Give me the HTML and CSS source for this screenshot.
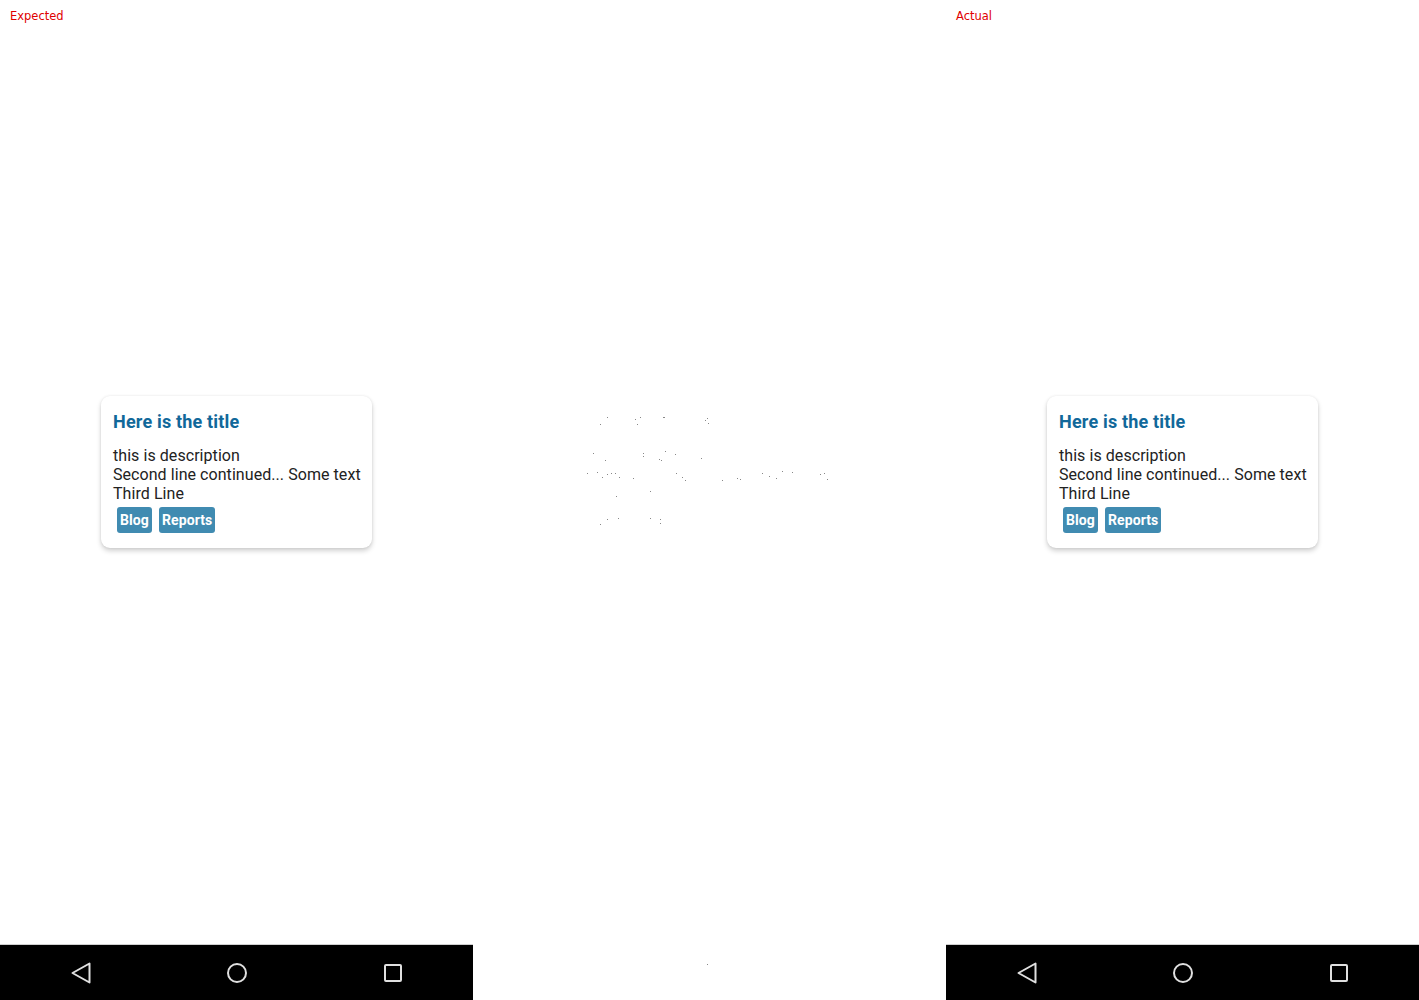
FILE: index.html
```html
<!DOCTYPE html>
<html>
<head>
<meta charset="utf-8">
<link rel="stylesheet" href="styles.css">
</head>
<body>
<div class="compare">
  <section class="panel">
    <span class="label">Expected</span>
    <div class="screen">
      <div class="card">
        <h2 class="title">Here is the title</h2>
        <p class="desc">this is description<br>Second line continued... Some text<br>Third Line</p>
        <div class="tags"><span class="tag">Blog</span><span class="tag">Reports</span></div>
      </div>
    </div>
    <nav class="navbar">
      <svg class="nav-icon" width="24" height="24" viewBox="0 0 24 24"><path d="M20.5 2.5 L20.5 21.5 L3.5 12 Z" fill="none" stroke="#e0e0e0" stroke-width="2" stroke-linejoin="round"/></svg>
      <svg class="nav-icon" width="24" height="24" viewBox="0 0 24 24"><circle cx="12" cy="12" r="9" fill="none" stroke="#e0e0e0" stroke-width="2"/></svg>
      <svg class="nav-icon" width="24" height="24" viewBox="0 0 24 24"><rect x="4" y="4" width="16" height="16" rx="1" fill="none" stroke="#e0e0e0" stroke-width="2"/></svg>
    </nav>
  </section>
  <section class="panel diff">
    <svg class="dots" width="473" height="1000" viewBox="0 0 473 1000">
      <g fill="#888">
        <rect x="134" y="417" width="1" height="1"/><rect x="127" y="424" width="1" height="1"/><rect x="162" y="419" width="1" height="1"/><rect x="167" y="417" width="1" height="1"/><rect x="190" y="417" width="2" height="1"/><rect x="164" y="424" width="1" height="1"/><rect x="232" y="420" width="1" height="1"/><rect x="235" y="423" width="1" height="1"/><rect x="234" y="418" width="1" height="1"/>
        <rect x="120" y="453" width="1" height="1"/><rect x="132" y="460" width="1" height="1"/><rect x="170" y="453" width="1" height="1"/><rect x="170" y="456" width="1" height="1"/><rect x="192" y="451" width="1" height="1"/><rect x="186" y="459" width="1" height="1"/><rect x="188" y="460" width="1" height="1"/><rect x="202" y="454" width="1" height="1"/><rect x="228" y="458" width="1" height="1"/>
        <rect x="114" y="473" width="1" height="1"/><rect x="124" y="472" width="1" height="1"/><rect x="129" y="477" width="1" height="1"/><rect x="134" y="474" width="1" height="1"/><rect x="138" y="473" width="1" height="1"/><rect x="142" y="473" width="1" height="1"/><rect x="146" y="477" width="1" height="1"/><rect x="160" y="478" width="1" height="1"/><rect x="203" y="473" width="1" height="1"/><rect x="209" y="477" width="1" height="1"/><rect x="212" y="480" width="1" height="1"/><rect x="249" y="480" width="1" height="1"/><rect x="264" y="478" width="1" height="1"/><rect x="267" y="479" width="1" height="1"/><rect x="289" y="473" width="1" height="1"/><rect x="296" y="476" width="1" height="1"/><rect x="303" y="478" width="1" height="1"/><rect x="309" y="471" width="1" height="1"/><rect x="319" y="472" width="1" height="1"/><rect x="347" y="474" width="1" height="1"/><rect x="351" y="473" width="1" height="1"/><rect x="354" y="479" width="1" height="1"/>
        <rect x="143" y="496" width="1" height="1"/><rect x="177" y="491" width="1" height="1"/>
        <rect x="127" y="524" width="1" height="1"/><rect x="134" y="519" width="1" height="1"/><rect x="145" y="518" width="1" height="1"/><rect x="177" y="518" width="1" height="1"/><rect x="187" y="519" width="1" height="1"/><rect x="187" y="523" width="1" height="1"/>
        <rect x="234" y="964" width="1" height="1"/>
      </g>
    </svg>
  </section>
  <section class="panel">
    <span class="label">Actual</span>
    <div class="screen">
      <div class="card">
        <h2 class="title">Here is the title</h2>
        <p class="desc">this is description<br>Second line continued... Some text<br>Third Line</p>
        <div class="tags"><span class="tag">Blog</span><span class="tag">Reports</span></div>
      </div>
    </div>
    <nav class="navbar">
      <svg class="nav-icon" width="24" height="24" viewBox="0 0 24 24"><path d="M20.5 2.5 L20.5 21.5 L3.5 12 Z" fill="none" stroke="#e0e0e0" stroke-width="2" stroke-linejoin="round"/></svg>
      <svg class="nav-icon" width="24" height="24" viewBox="0 0 24 24"><circle cx="12" cy="12" r="9" fill="none" stroke="#e0e0e0" stroke-width="2"/></svg>
      <svg class="nav-icon" width="24" height="24" viewBox="0 0 24 24"><rect x="4" y="4" width="16" height="16" rx="1" fill="none" stroke="#e0e0e0" stroke-width="2"/></svg>
    </nav>
  </section>
</div>
</body>
</html>
```
FILE: styles.css
```css
* { box-sizing: border-box; }
html, body { margin: 0; padding: 0; background: #fff; }
body { font-family: Roboto, "Noto Sans", sans-serif; }

.compare {
  display: flex;
  width: 1419px;
  height: 1000px;
}

.panel {
  position: relative;
  width: 473px;
  height: 1000px;
  display: flex;
  flex-direction: column;
  flex: none;
}

.label {
  position: absolute;
  left: 10px;
  top: 8px;
  font-family: "DejaVu Sans", sans-serif;
  font-size: 11.5px;
  line-height: 16px;
  color: #e00000;
}

.screen {
  flex: 1;
  display: flex;
  align-items: center;
  justify-content: center;
}

.card {
  width: 271px;
  background: #fff;
  border-radius: 9px;
  padding: 15px 12px 15px 12px;
  box-shadow: 0 3px 5px rgba(0,0,0,0.18), 0 0 3px rgba(0,0,0,0.08);
}

.title {
  margin: 0;
  font-size: 18px;
  line-height: 21px;
  font-weight: 700;
  letter-spacing: 0.18px;
  color: #11689a;
}

.desc {
  margin: 14px 0 0 0;
  font-size: 16px;
  line-height: 19px;
  letter-spacing: 0.06px;
  white-space: nowrap;
  color: #222;
}

.tags {
  display: flex;
  gap: 7px;
  margin: 4px 0 0 4px;
}

.tag {
  background: #408bb1;
  color: #fff;
  font-size: 14px;
  font-weight: 700;
  line-height: 16px;
  letter-spacing: 0.1px;
  padding: 5px 3px;
  border-radius: 3px;
}

.navbar {
  height: 56px;
  background: #000;
  border-top: 1px solid #cfcfcf;
  display: flex;
  align-items: center;
  justify-content: space-between;
  padding: 0 68px 0 69px;
}

.nav-icon { display: block; }

.diff .dots {
  display: block;
}
```
